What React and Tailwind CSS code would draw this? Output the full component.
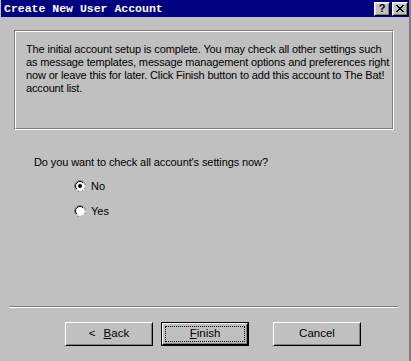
import React from 'react';

const sans = { fontFamily: '"Liberation Sans", Arial, sans-serif' };

const Radio = ({ checked }) => (
  <svg width="12" height="12" viewBox="0 0 12 12" className="shrink-0">
    {/* win95 style radio: gray/black top-left, white/light bottom-right */}
    <circle cx="6" cy="6" r="5.5" fill="none" stroke="#808080" />
    <circle cx="6" cy="6" r="4.5" fill="#ffffff" stroke="#000000" strokeDasharray="14 14" strokeDashoffset="-10" />
    <path d="M11 5v3M10 9v1M9 10h1M5 11h3M2 10h2" stroke="#ffffff" fill="none" />
    {checked && <circle cx="6" cy="6" r="2" fill="#000000" />}
  </svg>
);

const TitleButton = ({ children }) => (
  <div className="w-[16px] h-[14px] bg-[#c0c0c0] border border-t-white border-l-white border-r-black border-b-black flex">
    <div className="flex-1 border border-t-[#dfdfdf] border-l-[#dfdfdf] border-r-[#808080] border-b-[#808080] flex items-center justify-center text-black">
      {children}
    </div>
  </div>
);

const Button = ({ children, isDefault }) => (
  <div className={`w-[88px] h-[24px] flex ${isDefault ? 'border border-black' : ''}`}>
    <div className="flex-1 flex bg-[#c0c0c0] border border-t-white border-l-white border-r-black border-b-black">
      <div className="flex-1 flex border border-t-[#c0c0c0] border-l-[#c0c0c0] border-r-[#808080] border-b-[#808080] p-[1px]">
        <div className={`flex-1 flex items-center justify-center text-[11.5px] text-black ${isDefault ? 'border border-dotted border-black' : ''}`}>
          {children}
        </div>
      </div>
    </div>
  </div>
);

export default function App() {
  return (
    <div className="w-[411px] h-[361px] flex bg-[#c0c0c0] overflow-hidden" style={sans}>
      <div className="w-[409px] flex flex-col">
        {/* Title bar */}
        <div className="h-[17px] ml-[1px] bg-[#000080] flex items-center pl-[3px] pr-[1px]">
          <span
            className="text-white font-bold text-[11.5px] leading-none flex-1 whitespace-pre"
            style={{ fontFamily: '"Liberation Mono", "Courier New", monospace' }}
          >
            Create New User Account
          </span>
          <div className="flex gap-[2px]">
            <TitleButton>
              <span className="font-bold text-[11px] leading-none">?</span>
            </TitleButton>
            <TitleButton>
              <svg width="8" height="7" viewBox="0 0 8 7">
                <path d="M0 0h2v1h1v1h2v-1h1v-1h2v1h-1v1h-1v1h-1v1h1v1h1v1h1v1h-2v-1h-1v-1h-2v1h-1v1h-2v-1h1v-1h1v-1h1v-1h-1v-1h-1v-1h-1z" fill="#000" />
              </svg>
            </TitleButton>
          </div>
        </div>

        {/* Info box */}
        <div className="mt-[13px] ml-[14px] w-[380px] h-[100px] flex border border-t-[#808080] border-l-[#808080] border-r-white border-b-white">
          <div className="flex-1 border border-t-white border-l-white border-r-[#808080] border-b-[#808080] pl-[10px] pt-[11px]">
            <p className="text-[11px] leading-[13px] text-black whitespace-nowrap tracking-[-0.15px]">
              The initial account setup is complete. You may check all other settings such<br />
              as message templates, message management options and preferences right<br />
              now or leave this for later. Click Finish button to add this account to The Bat!<br />
              account list.
            </p>
          </div>
        </div>

        {/* Question */}
        <p className="mt-[26px] ml-[34px] text-[11px] leading-[13px] text-black tracking-[-0.1px]">
          Do you want to check all account's settings now?
        </p>
        <div className="mt-[11px] ml-[74px] flex flex-col gap-[13px]">
          <div className="flex items-center gap-[5px] h-[12px]">
            <Radio checked />
            <span className="text-[11px] text-black">No</span>
          </div>
          <div className="flex items-center gap-[5px] h-[12px]">
            <Radio />
            <span className="text-[11px] text-black">Yes</span>
          </div>
        </div>

        <div className="flex-1" />

        {/* Separator */}
        <div className="ml-[9px] w-[389px] border-t border-t-[#808080] border-b border-b-white" />

        {/* Buttons */}
        <div className="mt-[14px] mb-[15px] ml-[65px] flex gap-[8px]">
          <Button>
            <span className="mr-[8px]">&lt;</span>
            <span><span className="underline">B</span>ack</span>
          </Button>
          <Button isDefault>
            <span><span className="underline">F</span>inish</span>
          </Button>
          <div className="ml-[16px]">
            <Button>Cancel</Button>
          </div>
        </div>
      </div>
      <div className="w-[2px] bg-[#808080]" />
    </div>
  );
}
